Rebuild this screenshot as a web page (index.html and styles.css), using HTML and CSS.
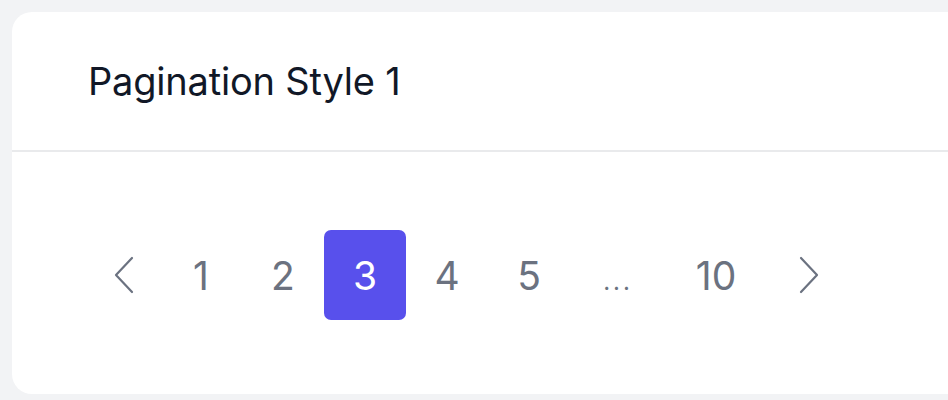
FILE: index.html
```html
<!DOCTYPE html>
<html lang="en">
<head>
<meta charset="utf-8">
<title>Pagination Style 1</title>
<link rel="stylesheet" href="styles.css">
</head>
<body>
<div class="card">
  <div class="card-header">
    <h2 class="card-title">Pagination Style 1</h2>
  </div>
  <div class="card-body">
    <nav class="pagination">
      <a class="page page-prev" href="#" aria-label="Previous">
        <svg width="22" height="38" viewBox="0 0 22 38" fill="none" stroke="currentColor" stroke-width="2.2" stroke-linecap="round" stroke-linejoin="round"><path d="M19 2 L3 19 L19 36"/></svg>
      </a>
      <a class="page" href="#">1</a>
      <a class="page" href="#">2</a>
      <a class="page active" href="#">3</a>
      <a class="page" href="#">4</a>
      <a class="page" href="#">5</a>
      <span class="page dots">...</span>
      <a class="page page-wide" href="#">10</a>
      <a class="page page-next" href="#" aria-label="Next">
        <svg width="22" height="38" viewBox="0 0 22 38" fill="none" stroke="currentColor" stroke-width="2.2" stroke-linecap="round" stroke-linejoin="round"><path d="M3 2 L19 19 L3 36"/></svg>
      </a>
    </nav>
  </div>
</div>
</body>
</html>
```
FILE: styles.css
```css
html, body {
  margin: 0;
  padding: 0;
}
body {
  background: #f2f3f5;
  font-family: Inter, "Noto Sans", sans-serif;
  overflow: hidden;
  padding: 12px 0 0 12px;
}
.card {
  width: 980px;
  height: 382px;
  background: #ffffff;
  border-radius: 20px;
  display: flex;
  flex-direction: column;
}
.card-header {
  height: 140px;
  border-bottom: 2px solid #e9eaec;
  display: flex;
  align-items: center;
  padding-left: 76px;
  box-sizing: border-box;
}
.card-title {
  margin: 0;
  font-size: 38px;
  font-weight: 400;
  color: #111827;
  letter-spacing: -0.2px;
}
.card-body {
  flex: 1;
  display: flex;
  align-items: center;
  padding-left: 76px;
  padding-top: 4px;
}
.pagination {
  display: flex;
  align-items: center;
}
.page {
  display: flex;
  align-items: center;
  justify-content: center;
  width: 82px;
  height: 90px;
  font-size: 39px;
  color: #6b7280;
  text-decoration: none;
  border-radius: 7px;
}
.page-prev {
  width: 72px;
}
.page-next {
  width: 86px;
}
.page-wide {
  width: 100px;
}
.active {
  background: #5850ec;
  color: #ffffff;
}
.dots {
  width: 96px;
  font-size: 24px;
  letter-spacing: 3px;
  padding-top: 12px;
  box-sizing: border-box;
}
```
